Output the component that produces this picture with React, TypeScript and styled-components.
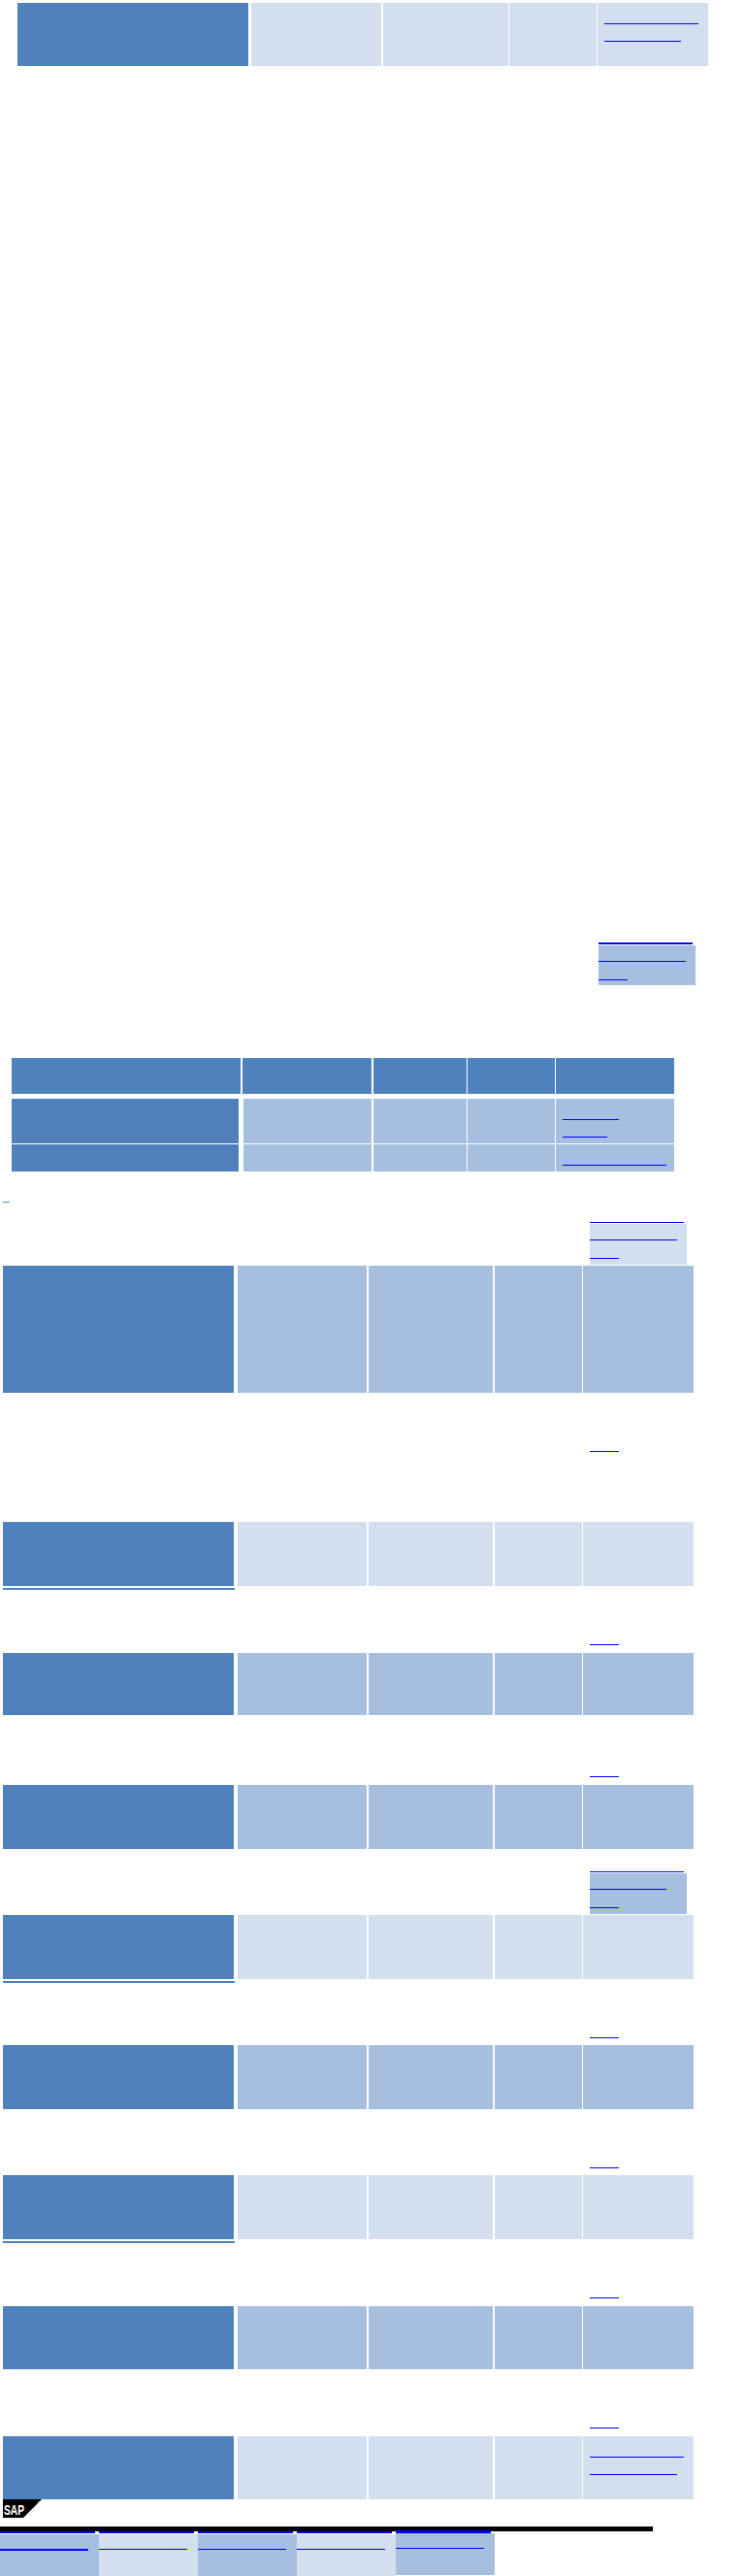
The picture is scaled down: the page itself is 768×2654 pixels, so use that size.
import React from 'react'
import styled, { createGlobalStyle } from 'styled-components'

type Tone = 'dark' | 'medium' | 'light'

const tones: Record<Tone, string> = {
    dark: '#4F81BD',
    medium: '#A7BFDE',
    light: '#D3DFEE',
}

interface Col {
    w: number
    gap: number
}

// column widths / gaps of the three table layouts on the page
const colsTop: Col[] = [
    { w: 238, gap: 0 },
    { w: 134, gap: 3 },
    { w: 129, gap: 2 },
    { w: 90, gap: 1 },
    { w: 114, gap: 1 },
]

const colsHead: Col[] = [
    { w: 236, gap: 0 },
    { w: 133, gap: 2 },
    { w: 96, gap: 2 },
    { w: 90, gap: 1 },
    { w: 122, gap: 1 },
]

const colsBody: Col[] = [
    { w: 234, gap: 0 },
    { w: 132, gap: 5 },
    { w: 96, gap: 2 },
    { w: 90, gap: 1 },
    { w: 122, gap: 1 },
]

const colsList: Col[] = [
    { w: 238, gap: 0 },
    { w: 133, gap: 4 },
    { w: 128, gap: 2 },
    { w: 90, gap: 2 },
    { w: 114, gap: 1 },
]

const GlobalStyle = createGlobalStyle`
    html, body {
        margin: 0;
        padding: 0;
        background: #ffffff;
    }
    body {
        font-family: 'Liberation Sans', Arial, sans-serif;
        font-size: 11px;
    }
`

const Page = styled.div`
    width: 768px;
    display: flex;
    flex-direction: column;
    align-items: flex-start;
`

const Row = styled.div<{ $top: number; $left: number; $h: number }>`
    display: flex;
    margin-top: ${(p) => p.$top}px;
    margin-left: ${(p) => p.$left}px;
    height: ${(p) => p.$h}px;
`

const Cell = styled.div<{ $w: number; $gap: number; $tone: Tone }>`
    width: ${(p) => p.$w}px;
    margin-left: ${(p) => p.$gap}px;
    background: ${(p) => tones[p.$tone]};
    display: flex;
    flex-direction: column;
    align-items: flex-start;
    gap: 17px;
    padding: 21px 0 0 7px;
    box-sizing: border-box;
`

const LinkLine = styled.a<{ $w: number; $weight?: number }>`
    display: block;
    width: ${(p) => p.$w}px;
    height: 0;
    border-bottom: ${(p) => p.$weight ?? 1}px solid #0000ff;
    text-decoration: none;
`

const JumpLink = styled.a<{ $top: number }>`
    display: block;
    margin-top: ${(p) => p.$top}px;
    margin-left: 608px;
    width: 30px;
    height: 0;
    border-bottom: 1px solid #0000ff;
`

const BlockRule = styled.div<{ $top: number; $left: number; $weight: number }>`
    margin-top: ${(p) => p.$top}px;
    margin-left: ${(p) => p.$left}px;
    width: 97px;
    height: ${(p) => p.$weight}px;
    background: #0000ff;
`

const LinkPanel = styled.div<{ $left: number; $h: number; $tone: Tone }>`
    margin-top: 1px;
    margin-left: ${(p) => p.$left}px;
    width: 100px;
    height: ${(p) => p.$h}px;
    background: ${(p) => tones[p.$tone]};
    display: flex;
    flex-direction: column;
    align-items: flex-start;
    gap: 18px;
    padding-top: 16px;
    box-sizing: border-box;
`

const CellRule = styled.div`
    margin-top: 2px;
    margin-left: 3px;
    width: 239px;
    height: 2px;
    background: ${tones.dark};
`

const Mark = styled.div`
    margin-top: 31px;
    margin-left: 3px;
    width: 7px;
    height: 1px;
    background: ${tones.dark};
`

const Logo = styled.svg`
    display: block;
    margin-left: 3px;
`

const FooterBar = styled.div`
    margin-top: 9px;
    width: 673px;
    height: 5px;
    background: #000000;
`

const TabStrip = styled.nav`
    display: flex;
`

const Tab = styled.div`
    width: 102px;
    display: flex;
    flex-direction: column;
`

const TabRule = styled.div<{ $weight: number }>`
    width: 98px;
    height: ${(p) => p.$weight}px;
    margin-top: ${(p) => (p.$weight > 2 ? -1 : 0)}px;
    background: #0000ff;
`

const TabPanel = styled.div<{ $tone: Tone; $top: number }>`
    margin-top: ${(p) => p.$top}px;
    height: 43px;
    background: ${(p) => tones[p.$tone]};
    padding-top: 15px;
    box-sizing: border-box;
`

interface IDataRow {
    cols: Col[]
    left: number
    top: number
    h: number
    tone: Tone
    head?: boolean
    links?: number[]
}

const DataRow: React.FC<IDataRow> = ({ cols, left, top, h, tone, head, links = [] }) => (
    <Row $top={top} $left={left} $h={h}>
        {cols.map((c, i) => (
            <Cell key={i} $w={c.w} $gap={c.gap} $tone={i === 0 || head ? 'dark' : tone}>
                {i === cols.length - 1 && links.map((w, j) => <LinkLine key={j} href="#" $w={w} />)}
            </Cell>
        ))}
    </Row>
)

const tabs: Tone[] = ['medium', 'light', 'medium', 'light', 'medium']

const App: React.FC = () => {
    return (
        <Page>
            <GlobalStyle />

            <DataRow cols={colsTop} left={18} top={3} h={65} tone="light" links={[97, 79]} />

            <BlockRule $top={903} $left={617} $weight={2} />
            <LinkPanel $left={617} $h={41} $tone="medium">
                <LinkLine href="#" $w={90} />
                <LinkLine href="#" $w={30} />
            </LinkPanel>

            <DataRow cols={colsHead} left={12} top={75} h={37} tone="dark" head />
            <DataRow cols={colsBody} left={12} top={5} h={46} tone="medium" links={[58, 46]} />
            <DataRow cols={colsBody} left={12} top={1} h={28} tone="medium" links={[107]} />

            <Mark />

            <BlockRule $top={20} $left={608} $weight={1} />
            <LinkPanel $left={608} $h={42} $tone="light">
                <LinkLine href="#" $w={90} />
                <LinkLine href="#" $w={30} />
            </LinkPanel>

            <DataRow cols={colsList} left={3} top={1} h={131} tone="medium" />

            <JumpLink href="#" $top={60} />
            <DataRow cols={colsList} left={3} top={72} h={66} tone="light" />
            <CellRule />

            <JumpLink href="#" $top={56} />
            <DataRow cols={colsList} left={3} top={8} h={64} tone="medium" />

            <JumpLink href="#" $top={63} />
            <DataRow cols={colsList} left={3} top={8} h={66} tone="medium" />

            <BlockRule $top={23} $left={608} $weight={1} />
            <LinkPanel $left={608} $h={42} $tone="medium">
                <LinkLine href="#" $w={79} />
                <LinkLine href="#" $w={30} />
            </LinkPanel>
            <DataRow cols={colsList} left={3} top={1} h={66} tone="light" />
            <CellRule />

            <JumpLink href="#" $top={56} />
            <DataRow cols={colsList} left={3} top={7} h={66} tone="medium" />

            <JumpLink href="#" $top={60} />
            <DataRow cols={colsList} left={3} top={7} h={66} tone="light" />
            <CellRule />

            <JumpLink href="#" $top={56} />
            <DataRow cols={colsList} left={3} top={8} h={65} tone="medium" />

            <JumpLink href="#" $top={60} />
            <DataRow cols={colsList} left={3} top={8} h={65} tone="light" links={[97, 90]} />

            <Logo width="41" height="19" viewBox="0 0 41 19">
                <polygon points="0,0 40,0 21,19 0,19" fill="#000000" />
                <line x1="38" y1="2" x2="27" y2="17" stroke="#e6e6e6" strokeWidth="1" />
                <text
                    x="1"
                    y="16"
                    fontSize="14"
                    fontWeight="bold"
                    fontFamily="'Liberation Sans', Arial, sans-serif"
                    fill="#ffffff"
                    textLength="21"
                    lengthAdjust="spacingAndGlyphs"
                >
                    SAP
                </text>
            </Logo>

            <FooterBar />
            <TabStrip>
                {tabs.map((tone, i) => {
                    const last = i === tabs.length - 1
                    return (
                        <Tab key={i}>
                            <TabRule $weight={last ? 3 : 2} />
                            <TabPanel $tone={tone} $top={last ? 0 : 1}>
                                <LinkLine href="#" $w={91} $weight={i === 0 ? 2 : 1} />
                            </TabPanel>
                        </Tab>
                    )
                })}
            </TabStrip>
        </Page>
    )
}

export default App
